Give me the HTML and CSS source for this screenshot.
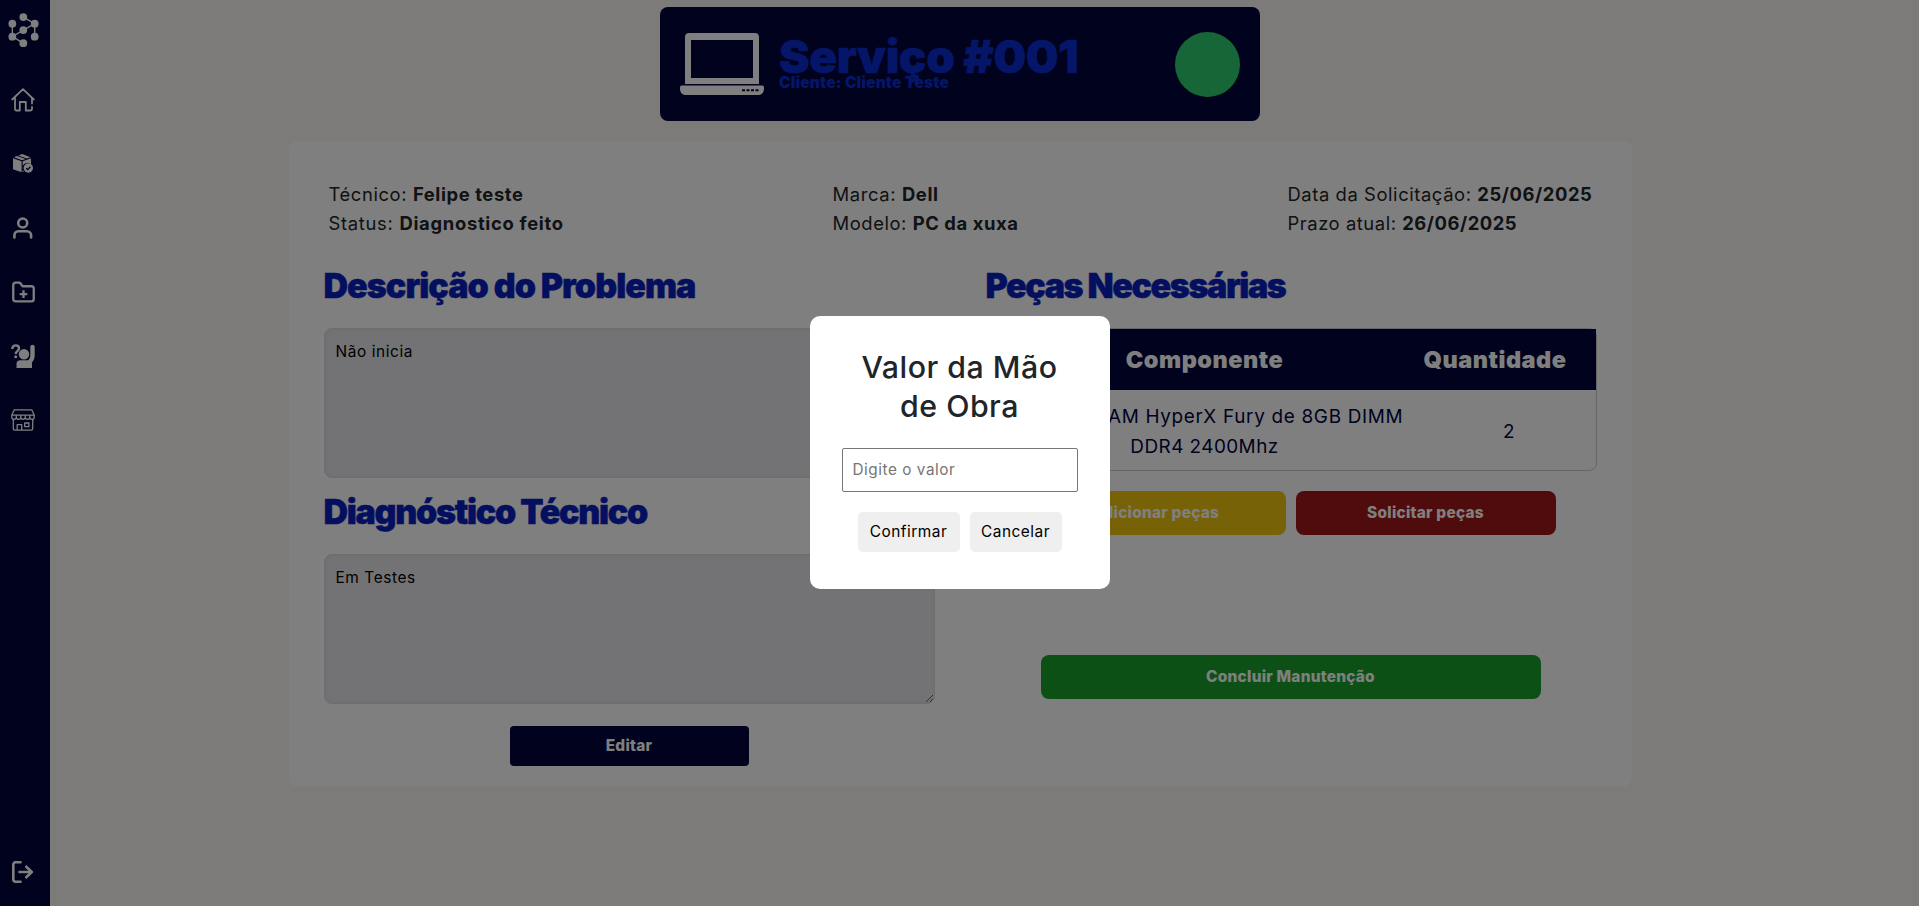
FILE: index.html
```html
<!DOCTYPE html>
<html lang="pt-BR">
<head>
<meta charset="utf-8">
<title>Serviço #001</title>
<link rel="stylesheet" href="styles.css">
</head>
<body>
<div class="app">
  <nav class="sidebar">
    <svg class="icon logo" viewBox="0 0 32 36"><g fill="#fff"><circle cx="15.300" cy="4.200" r="4"/><circle cx="4" cy="11" r="4"/><circle cx="27" cy="11" r="4"/><circle cx="15.300" cy="17.500" r="4"/><circle cx="4" cy="24.300" r="4"/><circle cx="27" cy="24.300" r="4"/><circle cx="15.300" cy="31" r="4"/></g><path d="M15.300 4.200 27 11v13.300M27 11 4 24.300V11M4 24.300 15.300 31" fill="none" stroke="#fff" stroke-width="1.400"/></svg>
    <svg class="icon home" viewBox="0 0 24 24"><path d="M1.200 11.500 12 1.200l10.800 10.300M4 10v11.300c0 .8.500 1.200 1.200 1.200h3.600V14h6v8.500h4.700c1 0 1.500-.8 1.500-1.500v-2M21 10v5.500" fill="none" stroke="#fff" stroke-width="1.800" stroke-linecap="round" stroke-linejoin="round"/></svg>
    <svg class="icon box" viewBox="0 0 20 20"><path d="M0 5.200 8.600 8.300v10.900L0 16.300zM9.700 8.300 18 5.200v6a5 5 0 0 0-7 7.300l-1.300.6zM.8 4.300 4 3.100l8.500 3-3.300 1.200zM5.200 2.600 9.200 1l8.300 3.200L13.800 5.600z" fill="#fff"/><circle cx="15.300" cy="15" r="4.700" fill="#fff"/><path d="m13.200 15.200 1.500 1.400 2.700-2.900" fill="none" stroke="#00043c" stroke-width="1.300"/></svg>
    <svg class="icon user" viewBox="0 0 20 22"><g fill="none" stroke="#fff" stroke-width="2.600" stroke-linecap="round"><circle cx="9.700" cy="6" r="4.500"/><path d="M1.400 20.500v-2c0-2.500 1.700-4.200 4-4.200h8.400c2.500 0 4.300 1.700 4.300 4.200v2"/></g></svg>
    <svg class="icon folder" viewBox="0 0 24 22"><path d="M1.300 4c0-1.700 1-2.700 2.500-2.700h4.500L11 5h9.200c1.600 0 2.500 1 2.500 2.500v10.700c0 1.600-1 2.500-2.500 2.500H3.800c-1.600 0-2.500-1-2.500-2.500zM12 9.200v8M8 13.200h8" fill="none" stroke="#fff" stroke-width="2.400" stroke-linejoin="round"/></svg>
    <svg class="icon ask" viewBox="0 0 24 24"><path d="M1.300 5c0-2.200 1.400-3.600 3.400-3.600S8 2.700 8 4.500c0 2.600-3.300 2.800-3.300 5.500" fill="none" stroke="#fff" stroke-width="2.400"/><circle cx="4.700" cy="12.700" r="1.500" fill="#fff"/><circle cx="13" cy="10.300" r="5.200" fill="#fff"/><path d="M5.500 24v-3.800c0-2.500 1.300-4 3.800-4H17c1.500-1 2.300-2.600 2.300-5V3.200C19.300 0 23.700 0 23.700 3.200v8c0 3.200-1.200 5.500-2.700 7V24z" fill="#fff"/></svg>
    <svg class="icon store" viewBox="0 0 24 22"><path d="M3.300.8h17.400L23.200 6v2.300c0 2.800-4.400 2.800-4.400 0 0 2.800-4.500 2.800-4.500 0 0 2.800-4.500 2.800-4.500 0 0 2.800-4.500 2.800-4.500 0 0 2.800-4.500 2.800-4.500 0V6zM.8 6.200h22.400M5.300 6v2.500M9.800 6v2.500M14.300 6v2.500M18.800 6v2.500M2.300 10.500v9c0 1 .5 1.700 1.500 1.700h16.400c1 0 1.500-.7 1.500-1.700v-9M6.200 21v-5.300h4.500V21M13.700 14h4.200v3.700h-4.200z" fill="none" stroke="#fff" stroke-width="1.300" stroke-linejoin="round"/></svg>
    <svg class="icon exit" viewBox="0 0 22 22"><path d="M8.500 1.200H4c-1.700 0-2.700 1-2.700 2.600v14.400c0 1.600 1 2.600 2.700 2.600h4.500M7.500 11h12M14.300 5.700l5.500 5.300-5.500 5.300" fill="none" stroke="#fff" stroke-width="2.600" stroke-linecap="round" stroke-linejoin="round"/></svg>
  </nav>

  <main class="content">
    <header class="service-header">
      <svg class="laptop" viewBox="0 0 84 62"><path fill-rule="evenodd" fill="#fff" d="M9 0h66c2.500 0 4 1.500 4 4v47H5V4c0-2.500 1.500-4 4-4zm2 7v38h62V7zM2 52.500h80c2 0 2 1 2 3 0 4-2 6.500-6 6.500H6c-4 0-6-2.500-6-6.500 0-2 0-3 2-3z"/><path d="M62 57.300h18" stroke="#00043c" stroke-width="2" stroke-dasharray="3 1.500"/></svg>
      <div class="service-title">
        <h1 class="service-name">Serviço #001</h1>
        <p class="client">Cliente: Cliente Teste</p>
      </div>
      <span class="status-dot"></span>
    </header>

    <section class="panel">
      <div class="info">
        <div><p class="i1">Técnico: <b>Felipe teste</b></p><p class="i2">Status: <b>Diagnostico feito</b></p></div>
        <div class="info-mid"><p class="i3">Marca: <b>Dell</b></p><p class="i4">Modelo: <b>PC da xuxa</b></p></div>
        <div class="info-end"><p class="i5">Data da Solicitação: <b>25/06/2025</b></p><p class="i6">Prazo atual: <b>26/06/2025</b></p></div>
      </div>
      <div class="columns">
        <div class="column">
          <h2 class="heading h-desc">Descrição do Problema</h2>
          <textarea class="field">Não inicia</textarea>
          <h2 class="heading h-diag">Diagnóstico Técnico</h2>
          <textarea class="field">Em Testes</textarea>
          <button class="btn btn-edit">Editar</button>
        </div>
        <div class="column">
          <h2 class="heading h-parts">Peças Necessárias</h2>
          <div class="parts">
            <div class="parts-head"><span class="col-name">Componente</span><span class="col-qty">Quantidade</span></div>
            <div class="parts-row"><span class="part-name">Memória RAM HyperX Fury de 8GB DIMM<br><span class="part-model">DDR4 2400Mhz</span></span><span class="part-qty">2</span></div>
          </div>
          <div class="actions">
            <button class="btn btn-add">Adicionar peças</button>
            <button class="btn btn-request">Solicitar peças</button>
          </div>
          <button class="btn btn-finish">Concluir Manutenção</button>
        </div>
      </div>
    </section>
  </main>
</div>

<div class="overlay">
  <div class="modal">
    <h2 class="modal-title">Valor da Mão<br>de Obra</h2>
    <input class="modal-input" type="text" placeholder="Digite o valor">
    <div class="modal-actions">
      <button class="modal-btn confirm">Confirmar</button>
      <button class="modal-btn cancel">Cancelar</button>
    </div>
  </div>
</div>
</body>
</html>
```

FILE: styles.css
```css
* { box-sizing: border-box; }
body, h1, h2, p { margin: 0; }
body { font-family: Inter, "Liberation Sans", sans-serif; color: #212529; background: #faf7f2; overflow: hidden; }
button, input, textarea { font-family: inherit; }
.app { display: flex; height: 906px; }

.sidebar { width: 50px; flex: none; background: #00043c; display: flex; flex-direction: column; align-items: flex-start; padding: 13px 0 21px 8px; }
.icon { display: block; flex: none; }
.logo { width: 32px; height: 35px; }
.home { width: 24px; height: 24px; margin: 40px 0 0 3px; }
.box { width: 20px; height: 20px; margin: 41px 0 0 5px; }
.user { width: 20px; height: 22px; margin: 44px 0 0 5px; }
.folder { width: 23px; height: 22px; margin: 42px 0 0 4px; }
.ask { width: 24px; height: 24px; margin: 41px 0 0 3px; }
.store { width: 24px; height: 22px; margin: 41px 0 0 3px; }
.exit { width: 22px; height: 22px; margin: auto 0 2px 4px; }

.content { flex: 1; display: flex; flex-direction: column; align-items: center; padding: 7px 49px 0 0; }
.service-header { width: 600px; height: 114px; flex: none; background: #00043c; border-radius: 8px; display: flex; align-items: center; padding: 0 20px; }
.laptop { width: 84px; height: 62px; }
.service-title { flex: 1; padding: 0 0 0 15px; color: #0a2cd2; height: 64px; }
.service-name { font-size: 46px; font-weight: 900; line-height: 48px; letter-spacing: -.4px; -webkit-text-stroke: .5px #0a2cd2; }
.client { font-size: 15.500px; font-weight: 900; line-height: 16px; margin-top: -5px; letter-spacing: .15px; }
.status-dot { width: 65px; height: 65px; border-radius: 50%; background: #2ecc71; }

.panel { width: 1343px; height: 645px; margin-top: 20px; background: #fff; border-radius: 8px; padding: 39px 35px 0; flex: none; }
.info { display: flex; padding: 0 5px; font-size: 18.400px; line-height: 29px; white-space: nowrap; }
.info > div { width: 504px; flex: none; }
.info > .info-mid { width: 455px; }
.info > .info-end { width: 303px; }
.info b { font-weight: 700; }
.i1 { letter-spacing: .6px; }
.i2 { letter-spacing: .7px; }
.i3 { letter-spacing: .63px; }
.i4, .i5 { letter-spacing: .58px; }
.i6 { letter-spacing: .55px; }
.columns { display: grid; grid-template-columns: 611px 611px; gap: 51px; margin-top: 24px; }
.column { display: flex; flex-direction: column; }
.heading { font-size: 34px; font-weight: 900; line-height: 48px; color: #0a1ebe; white-space: nowrap; margin-bottom: 18px; -webkit-text-stroke: .5px #0a1ebe; }
.h-desc { letter-spacing: -.95px; }
.h-parts { letter-spacing: -1.4px; }
.h-diag { margin: 10px 0 18px; letter-spacing: -1.3px; }
.field { height: 150px; width: 611px; background: #e6e6ea; border: 1px solid #dcdce2; border-radius: 8px; font-size: 15.400px; line-height: 24px; padding: 11px 11px; color: #000; letter-spacing: .6px; resize: vertical; box-shadow: inset 0 0 3px #d4d4da; }
.btn { border: 0; color: #fff; font-size: 15.400px; font-weight: 800; padding: 0 0 1px; height: 44px; border-radius: 8px; letter-spacing: .25px; }
.btn-edit { width: 239px; height: 40px; border-radius: 4px; background: #00043c; align-self: center; margin-top: 22px; }
.parts { border: 1px solid #ccc; border-radius: 8px; height: 143px; }
.parts-head { height: 61px; background: #00043c; color: #fff; display: flex; align-items: center; font-size: 23.500px; font-weight: 900; letter-spacing: .5px; }
.col-name, .part-name { width: 436px; text-align: center; flex: none; }
.col-qty { padding-left: 1px; }
.parts-row { height: 82px; padding-top: 1px; display: flex; align-items: center; font-size: 18.900px; line-height: 30px; color: #00043c; letter-spacing: .7px; white-space: nowrap; }
.part-model { letter-spacing: .45px; }
.part-qty { width: 175px; text-align: center; }
.actions { display: flex; gap: 10px; margin: 20px 0 0 40px; }
.actions .btn { width: 260px; }
.btn-add { background: #f1c40f; }
.btn-request { background: #a01818; }
.btn-finish { width: 500px; background: #1aa12c; margin: 120px 0 0 55px; }

.overlay { position: fixed; inset: 0; background: rgba(0, 0, 0, .5); display: flex; align-items: center; justify-content: center; padding-bottom: 1px; }
.modal { width: 300px; height: 273px; background: #fff; border-radius: 10px; padding: 32px; display: flex; flex-direction: column; align-items: center; }
.modal-title { font-size: 30.300px; font-weight: 500; line-height: 39px; text-align: center; white-space: nowrap; letter-spacing: .5px; }
.modal-input { width: 236px; height: 44px; margin-top: 22px; border: 1px solid #767676; border-radius: 2px; font-size: 15.300px; padding: 1px 10px 2px; letter-spacing: .55px; }
.modal-input::placeholder { color: #757575; }
.modal-actions { display: flex; gap: 10px; margin-top: 20px; }
.modal-btn { height: 40px; border: 0; border-radius: 5px; background: #efefef; color: #000; font-size: 15.400px; padding: 0 0 1px; letter-spacing: .5px; }
.confirm { width: 102px; }
.cancel { width: 92px; }
```
